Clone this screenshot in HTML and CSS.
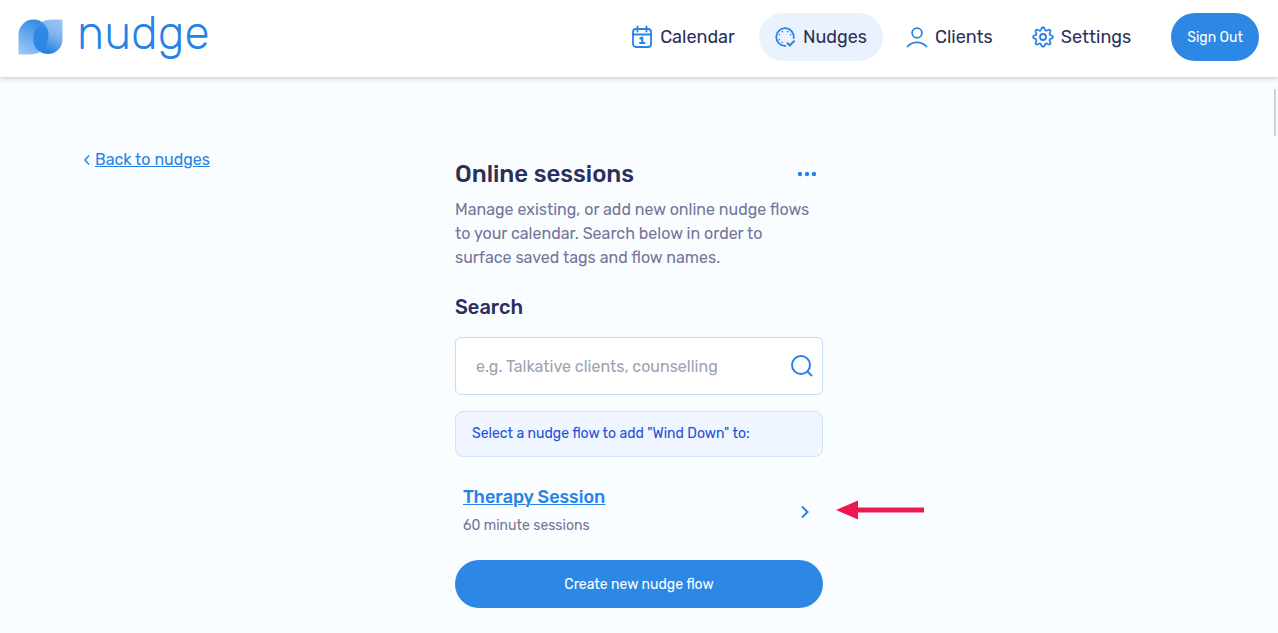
FILE: index.html
```html
<!DOCTYPE html>
<html lang="en">
<head>
<meta charset="utf-8">
<meta name="viewport" content="width=device-width, initial-scale=1">
<title>Online sessions</title>
<link rel="stylesheet" href="styles.css">
</head>
<body>
<header class="header">
  <a class="brand" href="#">
    <svg class="brand-mark" viewBox="0 0 45 36" aria-hidden="true">
      <defs>
        <linearGradient id="leaf-left" x1="0.1" y1="1" x2="0.6" y2="0"><stop offset="0" stop-color="#a2c9f5"/><stop offset="1" stop-color="#2f88e5"/></linearGradient>
        <linearGradient id="leaf-right" x1="0.8" y1="0" x2="0.4" y2="1"><stop offset="0" stop-color="#98c3f4"/><stop offset="0.4" stop-color="#7fb5f1"/><stop offset="0.95" stop-color="#2180e3"/></linearGradient>
        <linearGradient id="leaf-mid" x1="0" y1="0" x2="0" y2="1"><stop offset="0" stop-color="#4594ea"/><stop offset="0.4" stop-color="#2b86e5"/><stop offset="1" stop-color="#2b86e5"/></linearGradient>
        <clipPath id="leaf-clip"><path d="M0.500 35.500V15.500A15 15 0 0 1 30.500 15.500C30.500 27 24 35.500 12 35.500Z"/></clipPath>
      </defs>
      <path fill="url(#leaf-left)" d="M0.500 35.500V15.500A15 15 0 0 1 30.500 15.500C30.500 27 24 35.500 12 35.500Z"/>
      <path fill="url(#leaf-right)" d="M44.500 0.500V20.500A14.500 14.500 0 0 1 15.500 20.500C15.500 9 22 0.500 33 0.500Z"/>
      <path clip-path="url(#leaf-clip)" fill="url(#leaf-mid)" d="M44.500 0.500V20.500A14.500 14.500 0 0 1 15.500 20.500C15.500 9 22 0.500 33 0.500Z"/>
    </svg>
    <span class="brand-name">nudge</span>
  </a>
  <nav class="nav">
    <a class="nav-item" href="#">
      <svg class="icon" viewBox="0 0 22 24" aria-hidden="true"><rect x="2" y="4" width="18" height="18" rx="3"/><path d="M2 9.500h18M6.500 1.500v5M15.500 1.500v5"/><path class="bold" d="M9.300 13.500l2-1v5M9 18h4.500"/></svg>
      Calendar
    </a>
    <a class="nav-item active" href="#">
      <svg class="icon" viewBox="0 0 22 24" aria-hidden="true"><path d="M11.500 20.800A8.800 8.800 0 1 1 19.800 13"/><path class="bold" d="M13.500 18.300l2.300 2.200 4.200-4.400"/><path class="dots" d="M8.300 6.500v.2M13.700 6.500v.2M5.300 9.500v.2M16.700 9.500v.2M5.300 14.500v.2M8.300 17.300v.2"/></svg>
      Nudges
    </a>
    <a class="nav-item" href="#">
      <svg class="icon" viewBox="0 0 22 24" aria-hidden="true"><circle cx="11" cy="8" r="4.900"/><path d="M1.500 21.500c2.600-2.900 6-4.200 9.500-4.200s6.900 1.300 9.500 4.200"/></svg>
      Clients
    </a>
    <a class="nav-item" href="#">
      <svg class="icon" viewBox="0 0 22 24" aria-hidden="true"><circle cx="11" cy="12" r="3"/><path d="M9.100 4.500c.7-3 3.100-3 3.800 0 .3 1.200 1.400 1.500 2.200.9 2.700-1.700 4.300 0 2.700 2.600-.7 1-.1 1.900.9 2.200 3 .6 3 3 0 3.700-1.100.3-1.500 1.300-.9 2.200 1.700 2.600 0 4.300-2.600 2.700-1-.7-2-.2-2.300.9-.7 2.900-3.100 2.900-3.800 0-.3-1.100-1.300-1.500-2.200-.9-2.700 1.600-4.300 0-2.700-2.700.7-.9.200-1.900-.9-2.200-3-.7-3-3.100 0-3.700 1.100-.3 1.500-1.300.9-2.200-1.700-2.600 0-4.300 2.600-2.600 1 .6 2 .2 2.300-.9z"/></svg>
      Settings
    </a>
    <button class="button sign-out" type="button">Sign Out</button>
  </nav>
</header>

<main class="page">
  <div class="scroll-thumb" aria-hidden="true"></div>
  <a class="back" href="#">
    <svg class="back-icon" viewBox="0 0 8 12" aria-hidden="true"><path d="M6 1.500L2 6l4 4.500"/></svg>
    <span class="back-label">Back to nudges</span>
  </a>
  <section class="content">
    <div class="title-row">
      <h1 class="title">Online sessions</h1>
      <button class="more" type="button" aria-label="More options">
        <svg viewBox="0 0 20 6" width="20" height="6" aria-hidden="true"><circle cx="3" cy="3" r="2.200"/><circle cx="10" cy="3" r="2.200"/><circle cx="17" cy="3" r="2.200"/></svg>
      </button>
    </div>
    <p class="intro">Manage existing, or add new online nudge flows to your calendar. Search below in order to surface saved tags and flow names.</p>
    <label class="search-label" for="search">Search</label>
    <div class="search-box">
      <input class="search-input" id="search" type="text" placeholder="e.g. Talkative clients, counselling">
      <button class="search-button" type="button" aria-label="Search">
        <svg viewBox="0 0 24 24" width="24" height="24" aria-hidden="true"><circle cx="11" cy="11" r="9"/><path d="M17.500 17.500l4.500 4.500"/></svg>
      </button>
    </div>
    <p class="notice">Select a nudge flow to add "Wind Down" to:</p>
    <div class="flow">
      <div class="flow-text">
        <a class="flow-name" href="#">Therapy Session</a>
        <span class="flow-detail">60 minute sessions</span>
      </div>
      <svg class="flow-chevron" viewBox="0 0 10 14" aria-hidden="true"><path d="M2 1.500L7.500 7 2 12.500"/></svg>
      <svg class="pointer" viewBox="0 0 88 20" aria-hidden="true"><path d="M0 10L22 0.500V7.500H88V12.500H22V19.500Z"/></svg>
    </div>
    <button class="button create" type="button">Create new nudge flow</button>
  </section>
</main>
</body>
</html>
```
FILE: styles.css
```css
* {
  box-sizing: border-box;
}

body {
  margin: 0;
  min-height: 100vh;
  background: #fafdff;
  color: #2a2f5b;
  font-family: Rubik, Roboto, "Liberation Sans", sans-serif;
  font-size: 16px;
  line-height: 24px;
}

button,
input {
  font-family: inherit;
}

button {
  border: 0;
  padding: 0;
  background: none;
  cursor: pointer;
}

svg {
  display: block;
  flex: none;
}

.header {
  position: relative;
  display: flex;
  align-items: center;
  justify-content: space-between;
  padding: 13px 19px 16px 18px;
  background: #fff;
  box-shadow: 0 1px 5px rgba(40, 50, 70, 0.3);
}

.brand {
  display: flex;
  align-items: center;
  gap: 14px;
  color: #2683e6;
  text-decoration: none;
}

.brand-mark {
  width: 45px;
  height: 36px;
}

.brand-name {
  padding-bottom: 6px;
  font-family: Rubik, Inter, sans-serif;
  font-size: 46px;
  font-weight: 300;
  line-height: 40px;
}

.nav {
  display: flex;
  align-items: center;
  gap: 8px;
}

.nav-item {
  display: flex;
  align-items: center;
  gap: 7px;
  height: 48px;
  padding: 0 16px 0 15px;
  border-radius: 24px;
  color: #2a2f5b;
  font-size: 18px;
  text-decoration: none;
}

.nav-item.active {
  background: #e9f2fd;
}

.icon {
  width: 22px;
  height: 24px;
  fill: none;
  stroke: #2683e6;
  stroke-width: 1.8;
  stroke-linecap: round;
  stroke-linejoin: round;
}

.icon .bold {
  stroke-width: 2;
}

.icon .dots {
  stroke-width: 1.4;
}

.button {
  height: 48px;
  border-radius: 24px;
  background: #2d87e4;
  color: #fff;
  font-size: 14px;
}

.sign-out {
  margin-left: 16px;
  padding: 0 16px;
}

.page {
  position: relative;
  display: grid;
  grid-template-columns: 1fr 368px 1fr;
  align-items: start;
  padding: 71px 0 24px;
}

.scroll-thumb {
  position: absolute;
  top: 12px;
  right: 2px;
  width: 2px;
  height: 47px;
  background: #d6cce2;
}

.back {
  display: flex;
  align-items: center;
  justify-self: start;
  gap: 4px;
  margin-left: 83px;
  color: #2683e6;
  text-decoration: none;
}

.back-icon {
  width: 8px;
  height: 12px;
  fill: none;
  stroke: #2683e6;
  stroke-width: 1.5;
}

.back-label {
  text-decoration: underline;
}

.content {
  display: flex;
  flex-direction: column;
  padding-top: 10px;
}

.title-row {
  display: flex;
  align-items: center;
  justify-content: space-between;
  padding-right: 6px;
}

.title {
  margin: 0;
  font-size: 24px;
  font-weight: 500;
  line-height: 32px;
}

.more svg {
  fill: #2683e6;
}

.intro {
  margin: 8px 0 0;
  padding-right: 8px;
  color: #73759a;
}

.search-label {
  margin-top: 25px;
  font-size: 20px;
  font-weight: 500;
}

.search-box {
  display: flex;
  align-items: center;
  height: 58px;
  margin-top: 18px;
  padding: 0 8px 0 20px;
  border: 1px solid #c5dcf5;
  border-radius: 6px;
  background: #fff;
}

.search-input {
  flex: 1;
  min-width: 0;
  padding: 0;
  border: 0;
  outline: 0;
  background: none;
  color: #2a2f5b;
  font-size: 16px;
}

.search-input::placeholder {
  color: #9ca3b2;
}

.search-button svg {
  fill: none;
  stroke: #2683e6;
  stroke-width: 2;
}

.notice {
  margin: 16px 0 0;
  padding: 10px 16px;
  border: 1px solid #cfe3fb;
  border-radius: 8px;
  background: #eff6ff;
  color: #2450d8;
  font-size: 14px;
}

.flow {
  position: relative;
  display: flex;
  align-items: center;
  justify-content: space-between;
  margin-top: 28px;
  padding: 0 13px 0 8px;
}

.flow-text {
  display: flex;
  flex-direction: column;
  align-items: flex-start;
  gap: 5px;
}

.flow-name {
  color: #2683e6;
  font-size: 18px;
  font-weight: 500;
  text-decoration-thickness: 1px;
}

.flow-detail {
  color: #73759a;
  font-size: 14px;
}

.flow-chevron {
  width: 10px;
  height: 14px;
  fill: none;
  stroke: #2683e6;
  stroke-width: 2;
}

.pointer {
  position: absolute;
  top: 15px;
  left: calc(100% + 13px);
  width: 88px;
  height: 20px;
  fill: #ee1850;
}

.create {
  margin-top: 22px;
}
```
